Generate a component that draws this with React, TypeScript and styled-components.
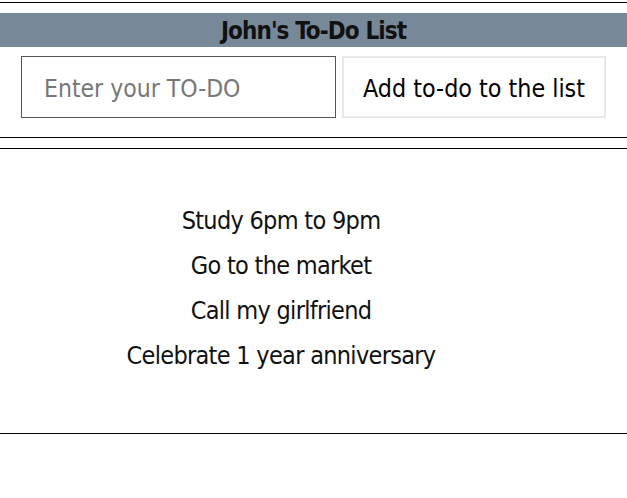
import React from "react";
import styled, { createGlobalStyle } from "styled-components";

const GlobalStyle = createGlobalStyle`
  html, body { margin: 0; padding: 0; background: #ffffff; }
  body { font-family: "DejaVu Sans Condensed", "Liberation Sans", sans-serif; }
`;

const Page = styled.div`
  padding-top: 2px;
`;

const TopSection = styled.section`
  border-top: 1px solid #000;
  border-bottom: 1px solid #000;
  padding: 10px 0 19px;
`;

const Title = styled.h1`
  margin: 0;
  height: 34px;
  line-height: 36px;
  background: #778899;
  color: #111;
  text-align: center;
  font-size: 24px;
  letter-spacing: -0.9px;
  font-weight: 700;
`;

const Form = styled.form`
  display: flex;
  justify-content: center;
  gap: 6px;
  margin-top: 9px;
`;

const Input = styled.input`
  box-sizing: border-box;
  width: 315px;
  height: 62px;
  border: 1px solid #555;
  padding: 2px 22px 0;
  font-family: inherit;
  font-size: 24.5px;
  color: #222;
  outline: none;
  &::placeholder { color: #777; }
`;

const Button = styled.button`
  box-sizing: border-box;
  width: 264px;
  height: 62px;
  border: 2px solid #e8e8e8;
  background: #fff;
  font-family: inherit;
  font-size: 24.8px;
  color: #000;
  padding: 2px 0 0;
`;

const ListSection = styled.section`
  margin-top: 10px;
  border-top: 1px solid #000;
  border-bottom: 1px solid #000;
  padding: 49px 65px 55px 0;
`;

const List = styled.ul`
  list-style: none;
  margin: 0;
  padding: 0;
  text-align: center;
`;

const Item = styled.li`
  font-size: 25px;
  letter-spacing: -0.7px;
  line-height: 45px;
  color: #111;
`;

const todos = [
  "Study 6pm to 9pm",
  "Go to the market",
  "Call my girlfriend",
  "Celebrate 1 year anniversary",
];

export default function App() {
  return (
    <Page>
      <GlobalStyle />
      <TopSection>
        <Title>John's To-Do List</Title>
        <Form onSubmit={(e) => e.preventDefault()}>
          <Input placeholder="Enter your TO-DO" />
          <Button type="submit">Add to-do to the list</Button>
        </Form>
      </TopSection>
      <ListSection>
        <List>
          {todos.map((t) => (
            <Item key={t}>{t}</Item>
          ))}
        </List>
      </ListSection>
    </Page>
  );
}
